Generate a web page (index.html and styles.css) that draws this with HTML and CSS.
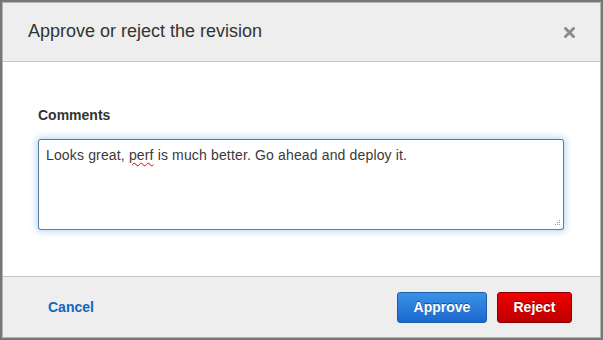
FILE: index.html
```html
<!DOCTYPE html>
<html>
<head>
<meta charset="utf-8">
<link rel="stylesheet" href="styles.css">
</head>
<body>
<div class="dialog">
  <div class="header">
    <div class="title">Approve or reject the revision</div>
    <svg class="close" width="11" height="11" viewBox="0 0 11 11"><path d="M1.5 1.5 L9.5 9.5 M9.5 1.5 L1.5 9.5" stroke="#8a8a8a" stroke-width="2.8" stroke-linecap="square"/></svg>
  </div>
  <div class="body">
    <div class="label">Comments</div>
    <div class="textarea">Looks great, <span class="spell">perf</span> is much better. Go ahead and deploy it.
      <svg class="grip" width="7" height="7" viewBox="0 0 7 7"><rect x="5" y="0" width="1" height="1" fill="#999"/><rect x="3" y="2" width="1" height="1" fill="#999"/><rect x="5" y="2" width="1" height="1" fill="#999"/><rect x="1" y="4" width="1" height="1" fill="#999"/><rect x="3" y="4" width="1" height="1" fill="#999"/><rect x="5" y="4" width="1" height="1" fill="#999"/></svg>
    </div>
  </div>
  <div class="footer">
    <a class="cancel">Cancel</a>
    <div class="actions">
      <button class="btn approve">Approve</button>
      <button class="btn reject">Reject</button>
    </div>
  </div>
</div>
</body>
</html>
```
FILE: styles.css
```css
html, body { margin: 0; padding: 0; }
body {
  background: #767676;
  padding: 2px;
  font-family: "Liberation Sans", Arial, sans-serif;
  width: 599px;
  height: 336px;
}
.dialog {
  width: 597px;
  height: 334px;
  border: 1px solid #b5b5b5;
  background: #fff;
  display: flex;
  flex-direction: column;
}
.header {
  height: 58px;
  background: #eeeeee;
  border-bottom: 1px solid #c8c8c8;
  display: flex;
  align-items: center;
  justify-content: space-between;
  padding: 0 25px 0 25px;
}
.title {
  font-size: 18px;
  color: #333;
  margin-top: -1px;
}
.close { margin-top: 1px; }
.body {
  flex: 1;
  padding: 44px 35px 0 35px;
}
.label {
  font-size: 14px;
  font-weight: bold;
  color: #333;
  line-height: 18px;
}
.textarea {
  margin-top: 15px;
  height: 77px;
  width: 510px;
  border: 1px solid #5d7f9e;
  border-top-color: #54789a;
  border-radius: 3px;
  box-shadow: 0 0 6px 2px rgba(110, 175, 235, 0.45);
  padding: 6px 7px;
  font-size: 14px;
  letter-spacing: 0.15px;
  line-height: 18px;
  color: #3a3a3a;
  position: relative;
}
.spell {
  text-decoration: underline wavy #e00000;
  text-decoration-thickness: 1px;
  text-underline-offset: 2px;
}
.grip { position: absolute; right: 2px; bottom: 2px; }
.footer {
  height: 60px;
  background: #eeeeee;
  border-top: 1px solid #c8c8c8;
  display: flex;
  align-items: center;
  justify-content: space-between;
  padding: 0 28px 0 45px;
}
.cancel {
  font-size: 14px;
  font-weight: bold;
  color: #1565c0;
}
.actions { display: flex; gap: 10px; }
.btn {
  height: 31px;
  border-radius: 3px;
  font-family: "Liberation Sans", Arial, sans-serif;
  font-size: 14px;
  font-weight: bold;
  color: #fff;
  text-shadow: 0 -1px 0 rgba(0,0,0,0.45);
  padding: 0;
}
.approve {
  width: 90px;
  background: linear-gradient(#3b91e8, #1a68cc);
  border: 1px solid #1b5ea8;
}
.reject {
  width: 75px;
  background: linear-gradient(#f00000, #bd0000);
  border: 1px solid #8a0000;
}
```
